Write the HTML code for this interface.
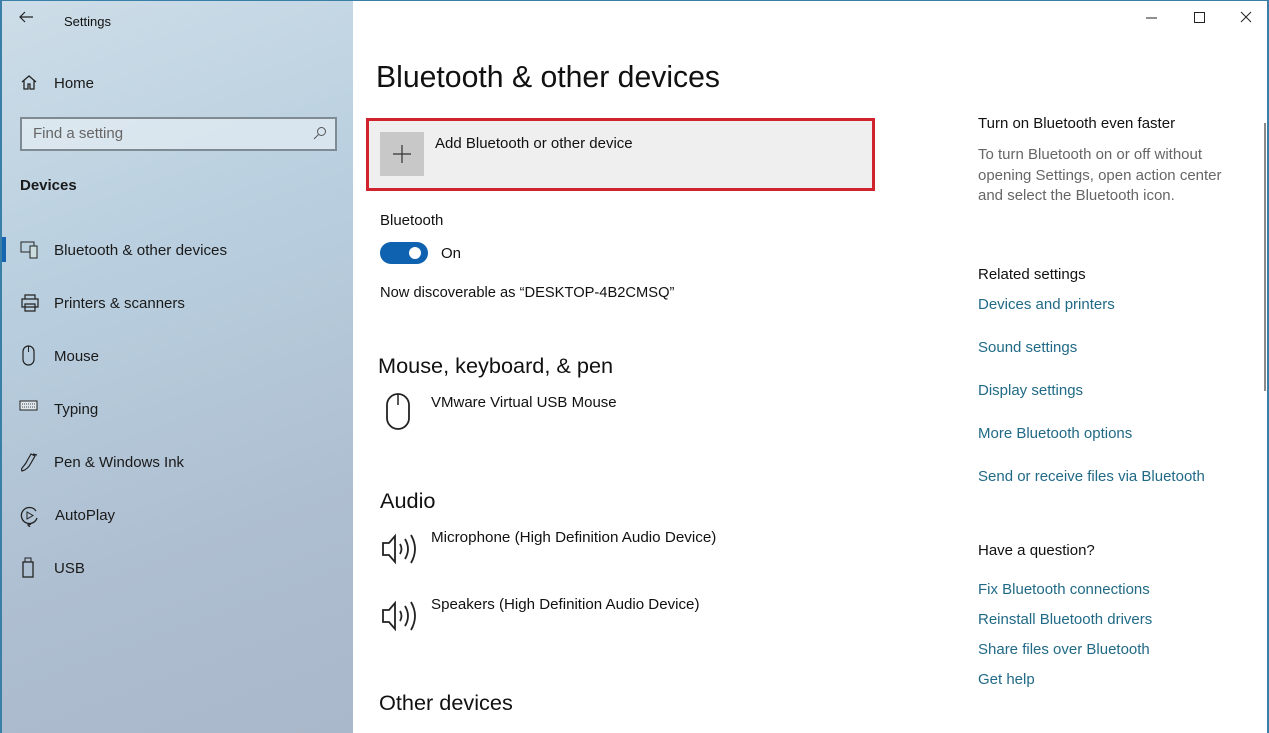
<!DOCTYPE html>
<html><head><meta charset="utf-8"><style>
*{margin:0;padding:0;box-sizing:border-box}
body{width:1269px;height:733px;overflow:hidden;font-family:"Liberation Sans",sans-serif;background:#fff;position:relative;color:#111}
.side{position:absolute;left:0;top:0;width:353px;height:733px;background:linear-gradient(160deg,#cddde8 0%,#b9cfdf 35%,#aebfd1 70%,#a9b8ca 100%);border-left:2px solid #3a7fa8;border-top:1px solid #3a7fa8}
.t{position:absolute;white-space:nowrap}
.nav{font-size:15px;color:#1a1a1a}
.ic{position:absolute}
.lk{font-size:15px;color:#216a86}
.h{font-size:21.7px}
</style></head><body>
<div class="side">
<svg class="ic" style="left:16px;top:9px" width="16" height="14"><path d="M15 7H2M7 2L2 7l5 5" stroke="#222" stroke-width="1.2" fill="none"/></svg>
<div class="t" style="left:62px;top:13px;font-size:13px">Settings</div>
<svg class="ic" style="left:18px;top:73px" width="18" height="17"><path d="M2 8L9 2l7 6M4 6v9h4v-5h2v5h4V6" stroke="#222" stroke-width="1.3" fill="none"/></svg>
<div class="t nav" style="left:52px;top:74px">Home</div>
<div style="position:absolute;left:18px;top:116px;width:317px;height:34px;border:2px solid #7f8a93;background:rgba(235,242,247,.6)"></div>
<div class="t" style="left:31px;top:124px;font-size:15px;color:#666">Find a setting</div>
<svg class="ic" style="left:311px;top:125px" width="14" height="14"><circle cx="8.5" cy="5.5" r="4" stroke="#555" fill="none"/><path d="M5.5 8.5L1 13" stroke="#555"/></svg>
<div class="t" style="left:18px;top:176px;font-size:15px;font-weight:bold;color:#1a1a1a">Devices</div>
<div style="position:absolute;left:0;top:236px;width:4px;height:25px;background:#1565b0"></div>
<svg class="ic" style="left:18px;top:240px" width="20" height="18"><rect x="1" y="1" width="13" height="10" stroke="#222" fill="none"/><rect x="10" y="5" width="7" height="12" stroke="#222" fill="#cdd" /></svg>
<div class="t nav" style="left:52px;top:241px;font-size:15.2px">Bluetooth &amp; other devices</div>
<svg class="ic" style="left:18px;top:293px" width="20" height="18"><path d="M5 5V1h10v4M2 5h16v8H2zM5 10h10v7H5z" stroke="#222" stroke-width="1.2" fill="none"/></svg>
<div class="t nav" style="left:52px;top:294px">Printers &amp; scanners</div>
<svg class="ic" style="left:19px;top:344px" width="16" height="22"><rect x="2" y="1" width="11" height="19" rx="5.5" stroke="#222" stroke-width="1.2" fill="none"/><path d="M7.5 1v6" stroke="#222"/></svg>
<div class="t nav" style="left:52px;top:347px">Mouse</div>
<svg class="ic" style="left:17px;top:399px" width="20" height="12"><rect x="1" y="1" width="17" height="9" stroke="#222" fill="#dfe6ec"/><path d="M3 4h13M3 7h13" stroke="#444" stroke-dasharray="1 1"/></svg>
<div class="t nav" style="left:52px;top:400px">Typing</div>
<svg class="ic" style="left:17px;top:450px" width="22" height="22"><path d="M3 20c-2-3 3-5 5-10l4-7 4 2-4 7c-2 4-5 7-9 8zM14 3l4 1" stroke="#222" stroke-width="1.2" fill="none"/></svg>
<div class="t nav" style="left:52px;top:453px">Pen &amp; Windows Ink</div>
<svg class="ic" style="left:17px;top:504px" width="22" height="22"><path d="M18 13A8 8 0 1 1 17 6M12 19l-3 1 2 2" stroke="#222" stroke-width="1.3" fill="none"/><path d="M8 7v7l6-3.5z" stroke="#222" fill="none"/></svg>
<div class="t nav" style="left:53px;top:506px">AutoPlay</div>
<svg class="ic" style="left:19px;top:556px" width="14" height="22"><rect x="2" y="5" width="10" height="15" stroke="#222" stroke-width="1.3" fill="none"/><rect x="4" y="1" width="6" height="4" stroke="#222" fill="none"/></svg>
<div class="t nav" style="left:52px;top:559px">USB</div>
</div>
<div style="position:absolute;left:353px;top:0;width:916px;height:1px;background:#3a7fa8"></div>
<div style="position:absolute;right:0;top:0;width:2px;height:733px;background:#3a7fa8"></div>
<svg class="ic" style="left:1146px;top:10px" width="110" height="16"><path d="M0 8h11" stroke="#222"/><rect x="48.5" y="2.5" width="10" height="10" stroke="#222" fill="none"/><path d="M95 2l10 10M105 2L95 12" stroke="#222"/></svg>
<div class="t" style="left:376px;top:61px;font-size:30.2px;color:#111">Bluetooth &amp; other devices</div>
<div style="position:absolute;left:366px;top:118px;width:509px;height:73px;border:3px solid #d0232d;background:#efefef"></div>
<div style="position:absolute;left:380px;top:132px;width:44px;height:44px;background:#c8c8c8"></div>
<svg class="ic" style="left:392px;top:144px" width="20" height="20"><path d="M10 1v18M1 10h18" stroke="#333" stroke-width="1.2"/></svg>
<div class="t" style="left:435px;top:135px;font-size:15px">Add Bluetooth or other device</div>
<div class="t" style="left:380px;top:212px;font-size:15px">Bluetooth</div>
<div style="position:absolute;left:380px;top:242px;width:48px;height:22px;border-radius:11px;background:#0f62b0"></div>
<div style="position:absolute;left:409px;top:247px;width:12px;height:12px;border-radius:6px;background:#fff"></div>
<div class="t" style="left:441px;top:245px;font-size:15px">On</div>
<div class="t" style="left:380px;top:285px;font-size:14.7px">Now discoverable as “DESKTOP-4B2CMSQ”</div>
<div class="t h" style="left:378px;top:353px">Mouse, keyboard, &amp; pen</div>
<svg class="ic" style="left:385px;top:392px" width="28" height="40"><rect x="2" y="2" width="22" height="35" rx="11" stroke="#222" stroke-width="1.8" fill="none"/><path d="M13 2v11" stroke="#222" stroke-width="1.5"/></svg>
<div class="t" style="left:431px;top:394px;font-size:15px">VMware Virtual USB Mouse</div>
<div class="t h" style="left:380px;top:488px">Audio</div>
<svg class="ic" style="left:380px;top:531px" width="40" height="36"><path d="M3 12h6l6-7v26l-6-7H3z" stroke="#222" stroke-width="1.8" fill="none"/><path d="M20 13q3 5 0 10M25 8q6 10 0 20M31 4q8 14 0 28" stroke="#222" stroke-width="1.8" fill="none"/></svg>
<div class="t" style="left:431px;top:529px;font-size:15.2px">Microphone (High Definition Audio Device)</div>
<svg class="ic" style="left:380px;top:598px" width="40" height="36"><path d="M3 12h6l6-7v26l-6-7H3z" stroke="#222" stroke-width="1.8" fill="none"/><path d="M20 13q3 5 0 10M25 8q6 10 0 20M31 4q8 14 0 28" stroke="#222" stroke-width="1.8" fill="none"/></svg>
<div class="t" style="left:431px;top:596px;font-size:15.1px">Speakers (High Definition Audio Device)</div>
<div class="t h" style="left:379px;top:690px">Other devices</div>
<div class="t" style="left:978px;top:115px;font-size:15px">Turn on Bluetooth even faster</div>
<div class="t" style="left:978px;top:145px;font-size:15px;color:#666;line-height:20.5px">To turn Bluetooth on or off without<br>opening Settings, open action center<br>and select the Bluetooth icon.</div>
<div class="t" style="left:978px;top:266px;font-size:15px">Related settings</div>
<div class="t lk" style="left:978px;top:296px">Devices and printers</div>
<div class="t lk" style="left:978px;top:339px">Sound settings</div>
<div class="t lk" style="left:978px;top:382px">Display settings</div>
<div class="t lk" style="left:978px;top:425px">More Bluetooth options</div>
<div class="t lk" style="left:978px;top:468px">Send or receive files via Bluetooth</div>
<div class="t" style="left:978px;top:542px;font-size:15px">Have a question?</div>
<div class="t lk" style="left:978px;top:581px">Fix Bluetooth connections</div>
<div class="t lk" style="left:978px;top:611px">Reinstall Bluetooth drivers</div>
<div class="t lk" style="left:978px;top:641px">Share files over Bluetooth</div>
<div class="t lk" style="left:978px;top:671px">Get help</div>
<div style="position:absolute;left:1264px;top:123px;width:2px;height:268px;background:#8a8a8a"></div>
</body></html>
